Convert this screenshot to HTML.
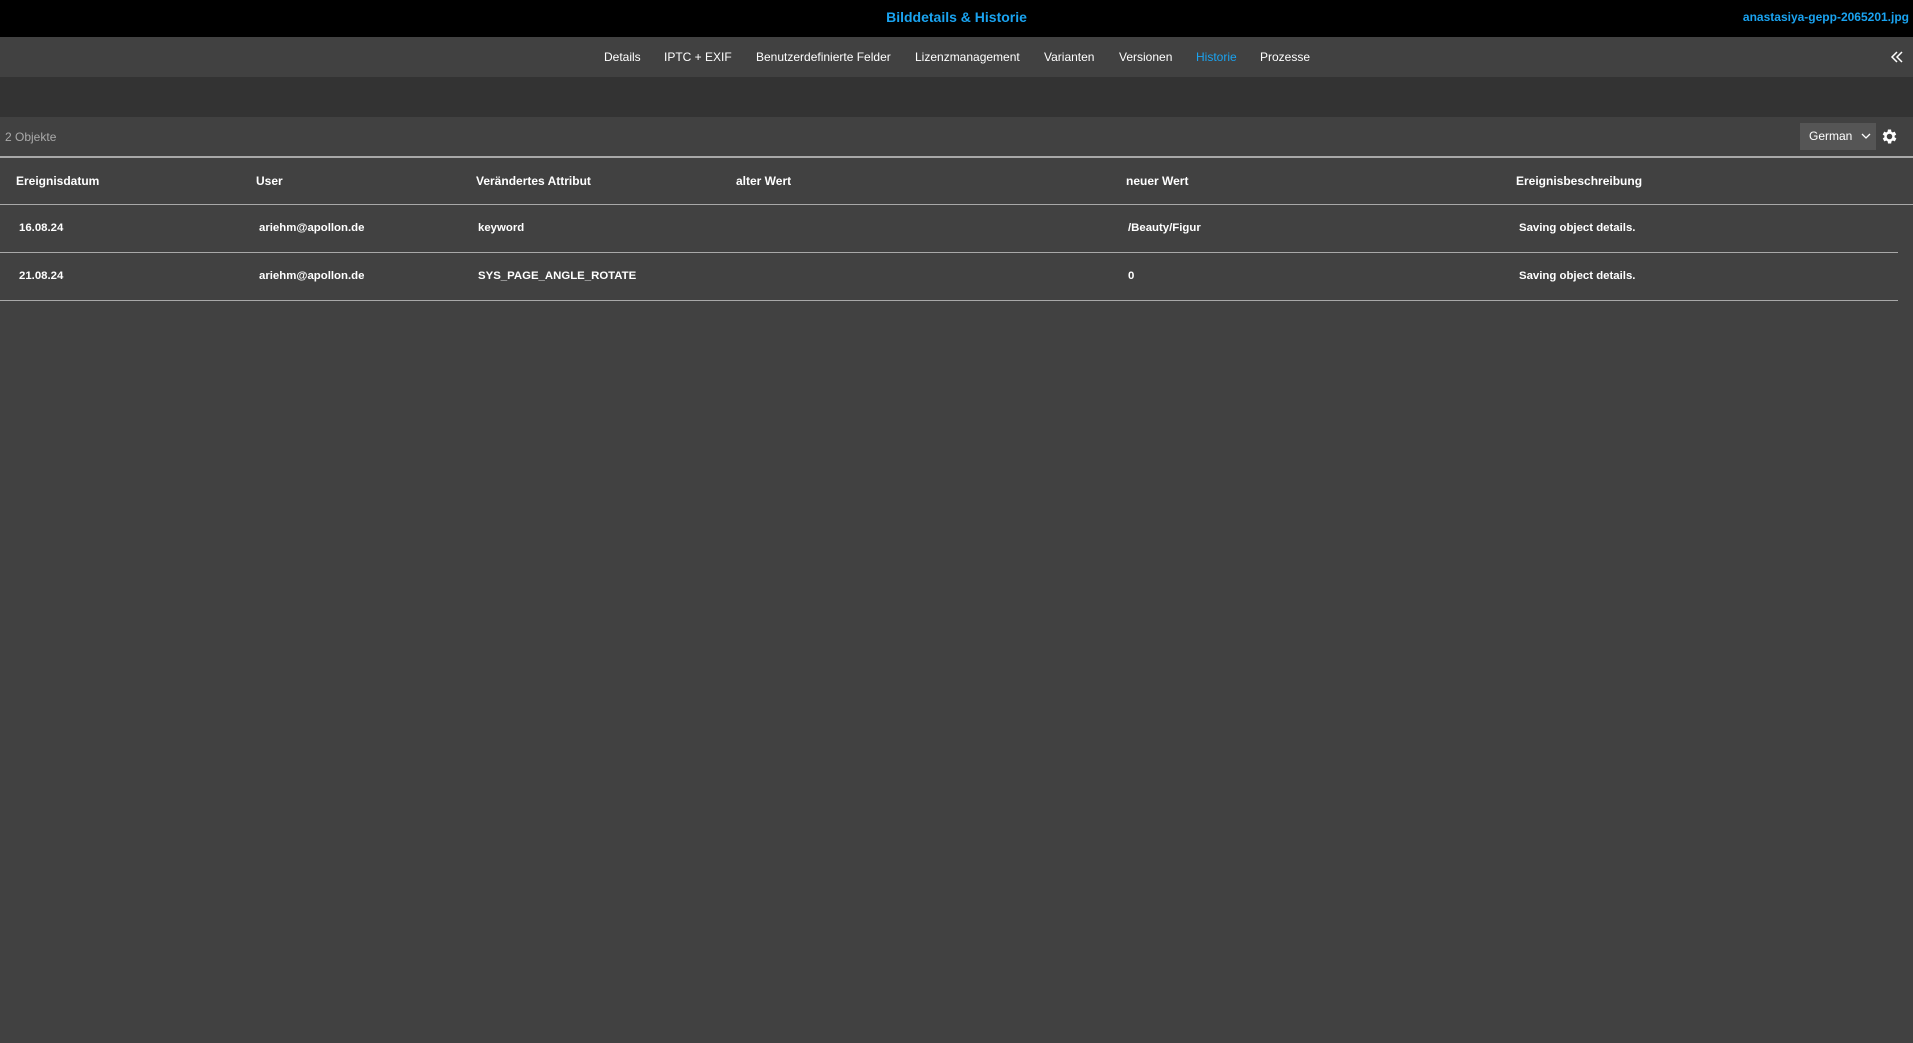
<!DOCTYPE html>
<html><head><meta charset="utf-8"><style>
body{margin:0;width:1913px;height:1043px;background:#414141;font-family:"Liberation Sans",Arial,sans-serif;color:#fff;position:relative;overflow:hidden}
.a{position:absolute;white-space:nowrap}
.top{position:absolute;left:0;top:0;width:1913px;height:37px;background:#000}
.nav{position:absolute;left:0;top:37px;width:1913px;height:40px;background:#414141}
.band{position:absolute;left:0;top:77px;width:1913px;height:40px;background:#333}
.line{position:absolute;left:0;height:1px;background:#a8a8a8}
.h{font-size:12px;font-weight:bold;top:174px}
.c{font-size:11.4px;font-weight:bold}
.n{font-size:12px;top:50px}
</style></head><body>
<div class="top"></div>
<div class="a" style="left:0;width:1913px;text-align:center;top:9px;font-size:14px;font-weight:bold;color:#1aa3f0">Bilddetails &amp; Historie</div>
<div class="a" style="right:4px;top:10px;font-size:12px;font-weight:bold;color:#1aa3f0">anastasiya-gepp-2065201.jpg</div>
<div class="nav"></div>
<div class="a n" style="left:604px">Details</div>
<div class="a n" style="left:664px">IPTC + EXIF</div>
<div class="a n" style="left:756px">Benutzerdefinierte Felder</div>
<div class="a n" style="left:915px">Lizenzmanagement</div>
<div class="a n" style="left:1044px">Varianten</div>
<div class="a n" style="left:1119px">Versionen</div>
<div class="a n" style="left:1196px;color:#1aa3f0">Historie</div>
<div class="a n" style="left:1260px">Prozesse</div>
<svg class="a" style="left:1890px;top:50px" width="14" height="14" viewBox="0 0 14 14"><path d="M7 2 L2 7 L7 12 M12 2 L7 7 L12 12" stroke="#fff" stroke-width="1.5" fill="none"/></svg>
<div class="band"></div>
<div class="a" style="left:5px;top:130px;font-size:12px;color:#aaa">2 Objekte</div>
<div class="a" style="left:1800px;top:123px;width:76px;height:27px;background:#555;font-size:12px;line-height:27px"><span style="margin-left:9px">German</span>
<svg style="position:absolute;left:61px;top:10px" width="10" height="7" viewBox="0 0 10 7"><path d="M1 1 L5 5 L9 1" stroke="#fff" stroke-width="1.3" fill="none"/></svg></div>
<svg class="a" style="left:1880px;top:127px" width="19" height="19" viewBox="0 0 24 24"><path fill="#fff" d="M19.4 13a7.5 7.5 0 0 0 0-2l2.1-1.6-2-3.5-2.5 1a7 7 0 0 0-1.7-1L15 3.2h-4l-.4 2.7a7 7 0 0 0-1.7 1l-2.5-1-2 3.5L6.6 11a7.5 7.5 0 0 0 0 2l-2.1 1.6 2 3.5 2.5-1a7 7 0 0 0 1.7 1l.4 2.7h4l.4-2.7a7 7 0 0 0 1.7-1l2.5 1 2-3.5zM13 15.5a3.5 3.5 0 1 1 0-7 3.5 3.5 0 0 1 0 7z" transform="translate(-1 0)"/></svg>
<div class="line" style="top:156px;width:1913px;height:2px"></div>
<div class="a h" style="left:16px">Ereignisdatum</div>
<div class="a h" style="left:256px">User</div>
<div class="a h" style="left:476px">Verändertes Attribut</div>
<div class="a h" style="left:736px">alter Wert</div>
<div class="a h" style="left:1126px">neuer Wert</div>
<div class="a h" style="left:1516px">Ereignisbeschreibung</div>
<div class="line" style="top:204px;width:1913px"></div>
<div class="a c" style="left:19px;top:222px">16.08.24</div>
<div class="a c" style="left:259px;top:222px">ariehm@apollon.de</div>
<div class="a c" style="left:478px;top:222px">keyword</div>
<div class="a c" style="left:1128px;top:222px">/Beauty/Figur</div>
<div class="a c" style="left:1519px;top:222px">Saving object details.</div>
<div class="line" style="top:252px;width:1898px"></div>
<div class="a c" style="left:19px;top:270px">21.08.24</div>
<div class="a c" style="left:259px;top:270px">ariehm@apollon.de</div>
<div class="a c" style="left:478px;top:270px">SYS_PAGE_ANGLE_ROTATE</div>
<div class="a c" style="left:1128px;top:270px">0</div>
<div class="a c" style="left:1519px;top:270px">Saving object details.</div>
<div class="line" style="top:300px;width:1898px"></div>
</body></html>
